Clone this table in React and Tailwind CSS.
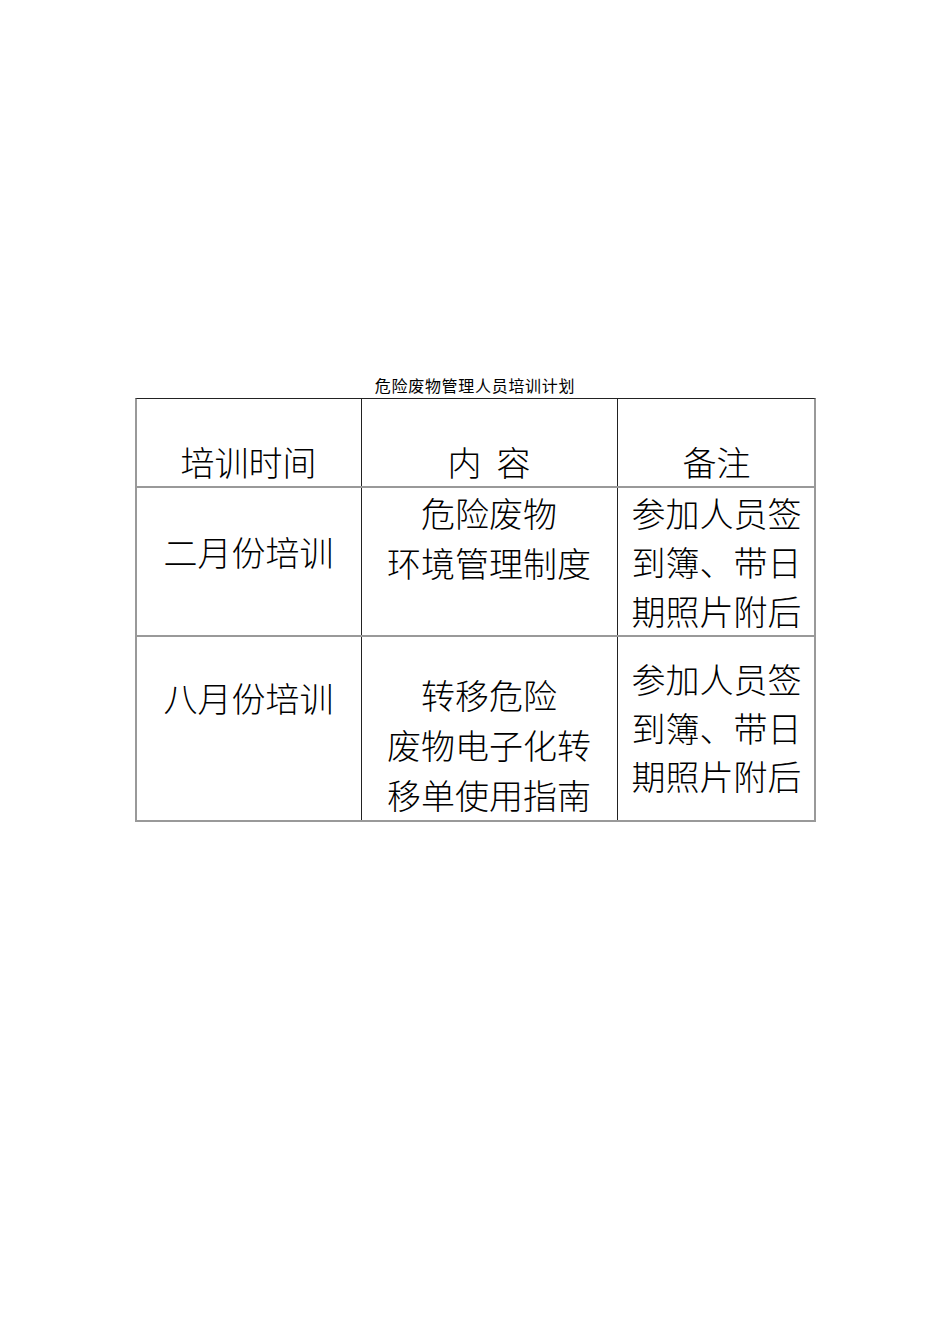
import React from 'react';

const font = { fontFamily: '"Noto Sans CJK SC", "Noto Sans", sans-serif' };

const rows = [
  {
    h: 'h-[149px]',
    time: { text: ['二月份培训'], cls: 'pt-[39px] leading-[49px]' },
    content: { text: ['危险废物', '环境管理制度'], cls: 'pt-0 leading-[50px]' },
    note: { text: ['参加人员签', '到簿、带日', '期照片附后'], cls: 'pt-0 leading-[49px]' },
  },
  {
    h: 'h-[183px]',
    time: { text: ['八月份培训'], cls: 'pt-[36px] leading-[49px]' },
    content: { text: ['转移危险', '废物电子化转', '移单使用指南'], cls: 'pt-[33px] leading-[50px]' },
    note: { text: ['参加人员签', '到簿、带日', '期照片附后'], cls: 'pt-[18px] leading-[48.5px]' },
  },
];

function Cell({ lines, cls, border }) {
  return (
    <div className={`flex flex-col items-center text-[34px] font-light text-black ${cls} ${border}`}>
      {lines.map((l, i) => (
        <span key={i} className="whitespace-nowrap">{l}</span>
      ))}
    </div>
  );
}

export default function App() {
  return (
    <div className="min-h-[1344px] w-full bg-white pt-[375px]" style={font}>
      <div className="text-center text-[16px] leading-[20px] text-black tracking-[0.7px]">
        危险废物管理人员培训计划
      </div>
      <div className="mx-auto mt-[3px] w-[681px] border-t border-t-[#222] border-l-2 border-l-[#999] border-r-2 border-r-[#999] border-b-2 border-b-[#999]">
        <div className="grid h-[89px] grid-cols-[225px_256px_198px] border-b-2 border-b-[#999]">
          <div className="flex items-end justify-center text-[34px] font-light leading-[49px] border-r border-r-[#222]">培训时间</div>
          <div className="flex items-end justify-center text-[34px] font-light leading-[49px] border-r border-r-[#222]">内&nbsp;&nbsp;容</div>
          <div className="flex items-end justify-center text-[34px] font-light leading-[49px]">备注</div>
        </div>
        {rows.map((r, i) => (
          <div
            key={i}
            className={`grid ${r.h} grid-cols-[225px_256px_198px] ${i === 0 ? 'border-b-2 border-b-[#999]' : ''}`}
          >
            <Cell lines={r.time.text} cls={r.time.cls} border="border-r border-r-[#222]" />
            <Cell lines={r.content.text} cls={r.content.cls} border="border-r border-r-[#222]" />
            <Cell lines={r.note.text} cls={r.note.cls} border="" />
          </div>
        ))}
      </div>
    </div>
  );
}
